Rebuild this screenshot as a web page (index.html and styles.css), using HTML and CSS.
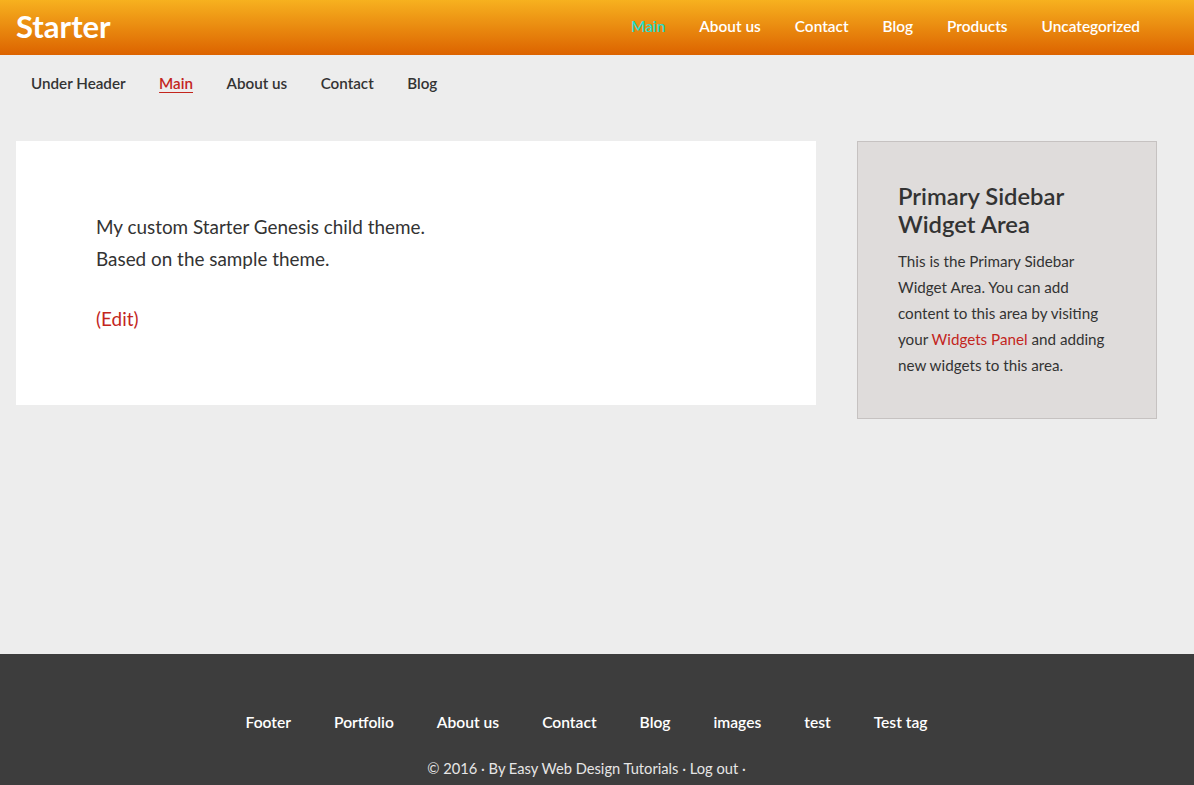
FILE: index.html
```html
<!DOCTYPE html>
<html lang="en">
<head>
<meta charset="utf-8">
<title>Starter</title>
<link rel="stylesheet" href="styles.css">
</head>
<body>
<header class="site-header">
  <div class="wrap header-wrap">
    <p class="site-title">Starter</p>
    <nav class="nav-primary">
      <a class="current" href="#">Main</a>
      <a href="#">About us</a>
      <a href="#">Contact</a>
      <a href="#">Blog</a>
      <a href="#">Products</a>
      <a href="#">Uncategorized</a>
    </nav>
  </div>
</header>
<nav class="nav-secondary">
  <div class="wrap secondary-wrap">
    <a href="#">Under Header</a>
    <a class="current" href="#">Main</a>
    <a href="#">About us</a>
    <a href="#">Contact</a>
    <a href="#">Blog</a>
  </div>
</nav>
<div class="site-inner">
  <div class="wrap content-sidebar">
    <main class="content">
      <article class="entry">
        <p class="entry-text">My custom Starter Genesis child theme.<br>Based on the sample theme.</p>
        <p class="entry-edit"><a href="#">(Edit)</a></p>
      </article>
    </main>
    <aside class="sidebar">
      <h4 class="widget-title">Primary Sidebar Widget Area</h4>
      <p class="widget-text">This is the Primary Sidebar Widget Area. You can add content to this area by visiting your <a href="#">Widgets Panel</a> and adding new widgets to this area.</p>
    </aside>
  </div>
</div>
<footer class="site-footer">
  <div class="wrap footer-wrap">
    <nav class="nav-footer">
      <a href="#">Footer</a>
      <a href="#">Portfolio</a>
      <a href="#">About us</a>
      <a href="#">Contact</a>
      <a href="#">Blog</a>
      <a href="#">images</a>
      <a href="#">test</a>
      <a href="#">Test tag</a>
    </nav>
    <p class="copyright">© 2016 · By Easy Web Design Tutorials · Log out ·</p>
  </div>
</footer>
</body>
</html>
```

FILE: styles.css
```css
* { box-sizing: border-box; }
html, body { margin: 0; padding: 0; }
body {
  background: #ededed;
  color: #333;
  font-family: Lato, "Open Sans", sans-serif;
  font-size: 16px;
  overflow: hidden;
}
a { text-decoration: none; color: inherit; }
p, h4 { margin: 0; }

.wrap {
  width: 1141px;
  margin-left: 16px;
}

/* header */
.site-header {
  height: 55px;
  background: linear-gradient(to bottom, #f7b11f 0%, #dc6300 100%);
}
.header-wrap {
  height: 55px;
  display: flex;
  align-items: center;
  justify-content: space-between;
}
.site-title {
  color: #fff;
  font-size: 31px;
  font-weight: 700;
  line-height: 1;
  margin-top: -3px;
}
.nav-primary {
  display: flex;
  margin-bottom: 4px;
}
.nav-primary a {
  color: #fff;
  font-weight: 600;
  font-size: 15.4px;
  padding: 0 17px;
  line-height: 24px;
}
.nav-primary a.current { color: #27dccb; }

/* secondary nav */
.nav-secondary {
  height: 56px;
}
.secondary-wrap {
  display: flex;
  align-items: center;
  height: 56px;
}
.secondary-wrap a {
  font-weight: 600;
  font-size: 15.2px;
  padding: 0 17px 0 15px;
  margin-right: 1.5px;
  line-height: 24px;
  color: #333;
}
.secondary-wrap a.current {
  color: #c3251d;
  text-decoration: underline;
  text-underline-offset: 3px;
}

/* content */
.site-inner {
  min-height: 543px;
  padding-top: 30px;
}
.content-sidebar {
  display: flex;
  align-items: flex-start;
  gap: 41px;
}
.content {
  width: 800px;
  background: #fff;
}
.entry {
  padding: 70px 80px;
}
.entry-text {
  font-size: 18.9px;
  line-height: 32px;
  margin-bottom: 28px;
}
.entry-edit {
  font-size: 18.9px;
  line-height: 32px;
}
.entry-edit a { color: #c3251d; }

.sidebar {
  width: 300px;
  background: #dfdcdb;
  border: 1px solid #c6c2c1;
  padding: 40px;
}
.widget-title {
  font-size: 23.8px;
  line-height: 28px;
  font-weight: 600;
  margin-bottom: 10px;
}
.widget-text {
  font-size: 15.2px;
  line-height: 26px;
}
.widget-text a { color: #c3251d; }

/* footer */
.site-footer {
  background: #3d3d3d;
  color: #fff;
  height: 200px;
  padding-top: 50px;
}
.footer-wrap {
  text-align: center;
}
.nav-footer {
  display: flex;
  justify-content: center;
}
.nav-footer a {
  font-weight: 600;
  font-size: 15.6px;
  line-height: 24px;
  padding: 6px 21.5px;
}
.copyright {
  margin-top: 15px;
  font-size: 14.7px;
  line-height: 26px;
  color: #e6e6e6;
}
```
